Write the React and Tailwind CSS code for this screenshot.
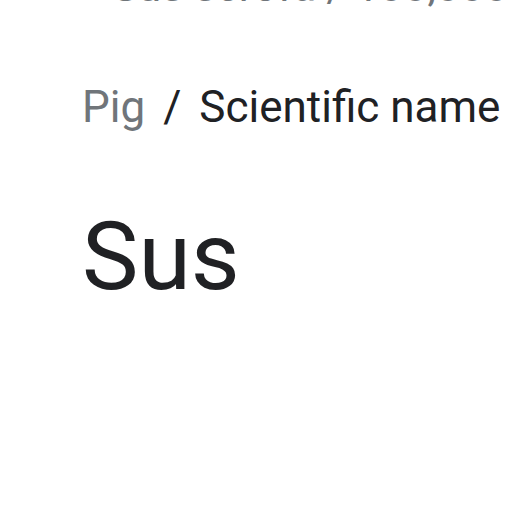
export default function App() {
  return (
    <div className="w-[516px] h-[516px] bg-white overflow-hidden" style={{ fontFamily: "Roboto, sans-serif" }}>
      {/* Ligne précédente coupée en haut */}
      <div className="-mt-[37.5px] pl-[112px] text-[43px] leading-[46px] text-[#70757a] whitespace-nowrap">
        Sus scrofa / 100,000 / Domestic
      </div>

      <div className="mt-[70.5px] pl-[82px] flex items-baseline text-[44px] leading-[56px] whitespace-nowrap">
        <span className="text-[#70757a]">Pig</span>
        <span className="mx-[18px] text-[#202124]">/</span>
        <span className="text-[#202124]">Scientific name</span>
      </div>

      <div className="mt-[67px] pl-[82px] text-[95px] leading-[110px] text-[#202124]">
        Sus
      </div>
    </div>
  );
}
